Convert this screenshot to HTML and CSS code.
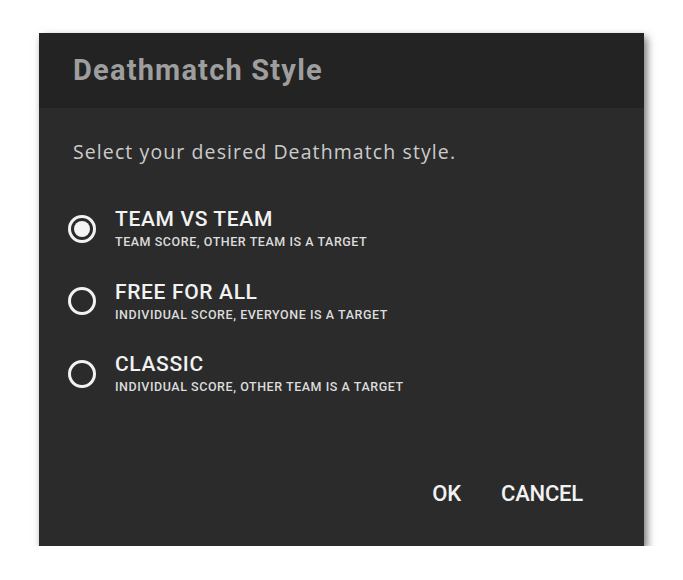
FILE: index.html
```html
<!DOCTYPE html>
<html>
<head>
<meta charset="utf-8">
<link rel="stylesheet" href="styles.css">
</head>
<body>
<div class="page">
  <div class="dialog">
    <div class="header">
      <h1 class="title">Deathmatch Style</h1>
    </div>
    <div class="content">
      <p class="prompt">Select your desired Deathmatch style.</p>
      <div class="options">
        <div class="option">
          <span class="radio checked"></span>
          <div class="label">
            <div class="name">TEAM VS TEAM</div>
            <div class="desc">TEAM SCORE, OTHER TEAM IS A TARGET</div>
          </div>
        </div>
        <div class="option">
          <span class="radio"></span>
          <div class="label">
            <div class="name">FREE FOR ALL</div>
            <div class="desc">INDIVIDUAL SCORE, EVERYONE IS A TARGET</div>
          </div>
        </div>
        <div class="option">
          <span class="radio"></span>
          <div class="label">
            <div class="name">CLASSIC</div>
            <div class="desc">INDIVIDUAL SCORE, OTHER TEAM IS A TARGET</div>
          </div>
        </div>
      </div>
      <div class="footer">
        <span class="btn">OK</span>
        <span class="btn">CANCEL</span>
      </div>
    </div>
  </div>
</div>
</body>
</html>
```
FILE: styles.css
```css
html, body {
  margin: 0;
  padding: 0;
  background: #ffffff;
}

.page {
  padding: 33px 0 0 39px;
}

.dialog {
  width: 605px;
  height: 513px;
  background: #2b2b2b;
  box-shadow: 3px 4px 8px rgba(0, 0, 0, 0.55);
  display: flex;
  flex-direction: column;
  font-family: Roboto, "Liberation Sans", sans-serif;
}

.header {
  height: 75px;
  background: #232323;
  display: flex;
  align-items: center;
  padding: 0 0 2px 34px;
  box-sizing: border-box;
}

.title {
  margin: 0;
  font-size: 29px;
  line-height: 34px;
  font-weight: 700;
  color: #9e9e9e;
  letter-spacing: 1.2px;
}

.content {
  flex: 1;
  display: flex;
  flex-direction: column;
  padding: 31px 61px 39px 29px;
}

.prompt {
  margin: 0 0 42px 5px;
  font-family: "Open Sans", sans-serif;
  font-weight: 400;
  font-size: 19.5px;
  line-height: 26px;
  color: #cbcbcb;
  letter-spacing: 1.1px;
}

.options {
  display: flex;
  flex-direction: column;
  gap: 29.5px;
}

.option {
  display: flex;
  align-items: center;
  gap: 19px;
}

.radio {
  width: 28px;
  height: 28px;
  box-sizing: border-box;
  border: 3px solid #f2f2f2;
  border-radius: 50%;
  flex: none;
  display: flex;
  align-items: center;
  justify-content: center;
}

.radio.checked::after {
  content: "";
  width: 16px;
  height: 16px;
  border-radius: 50%;
  background: #f4f4f4;
}

.name {
  font-size: 21px;
  line-height: 24px;
  font-weight: 500;
  color: #f2f2f2;
  letter-spacing: 0.65px;
}

.desc {
  margin-top: 3px;
  font-size: 12.5px;
  line-height: 16px;
  font-weight: 500;
  color: #dcdcdc;
  letter-spacing: 0.55px;
}

.footer {
  margin-top: auto;
  display: flex;
  justify-content: flex-end;
  gap: 40px;
}

.btn {
  font-size: 22px;
  line-height: 26px;
  font-weight: 500;
  color: #f2f2f2;
  letter-spacing: -0.2px;
}
```
